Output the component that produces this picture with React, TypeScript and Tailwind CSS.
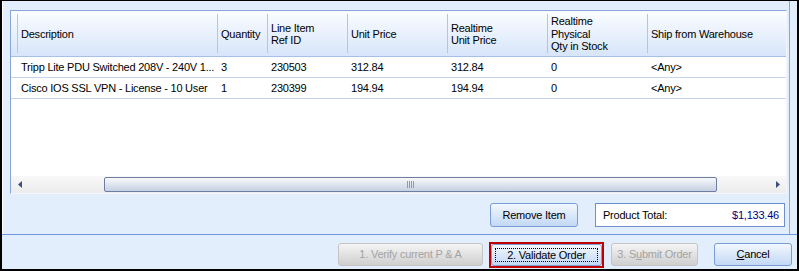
import React from "react";

const cols = [
  { w: "w-[200px]", label: ["Description"] },
  { w: "w-[50px]", label: ["Quantity"] },
  { w: "w-[80px]", label: ["Line Item", "Ref ID"] },
  { w: "w-[100px]", label: ["Unit Price"] },
  { w: "w-[100px]", label: ["Realtime", "Unit Price"] },
  { w: "w-[100px]", label: ["Realtime", "Physical", "Qty in Stock"] },
  { w: "w-[139px]", label: ["Ship from Warehouse"] },
];

const rows = [
  ["Tripp Lite PDU Switched 208V - 240V 1...", "3", "230503", "312.84", "312.84", "0", "<Any>"],
  ["Cisco IOS SSL VPN - License - 10 User", "1", "230399", "194.94", "194.94", "0", "<Any>"],
];

function Arrow({ dir }: { dir: "left" | "right" }) {
  return (
    <div className="w-[17px] h-full flex items-center justify-center">
      <svg width="4" height="7" viewBox="0 0 4 7">
        {dir === "left" ? (
          <polygon points="4,0 4,7 0,3.5" fill="#3d4f7c" />
        ) : (
          <polygon points="0,0 0,7 4,3.5" fill="#3d4f7c" />
        )}
      </svg>
    </div>
  );
}

function Grid() {
  return (
    <div className="w-[777px] h-[184px] shrink-0 flex flex-col bg-white border border-[#87a5d9] border-r-[#f3f7fd] border-b-[#f3f7fd]">
      <div className="h-[46px] shrink-0 flex border-b border-[#a6c0e6] bg-linear-to-b from-[#fbfdff] to-[#d7e5fa]">
        <div className="w-[6px] shrink-0" />
        {cols.map((c, i) => (
          <div key={i} className={`${c.w} shrink-0 flex`}>
            <div className="w-px my-[3px] bg-[#adc6ea]" />
            <div className="pl-[3px] pt-[1px] flex flex-col justify-center leading-[12.5px] whitespace-nowrap">
              {c.label.map((l, j) => (
                <span key={j}>{l}</span>
              ))}
            </div>
          </div>
        ))}
      </div>
      {rows.map((r, i) => (
        <div key={i} className="h-[21px] shrink-0 flex items-center border-b border-[#c6d5ec]">
          <div className="w-[6px] shrink-0" />
          {r.map((v, j) => (
            <div key={j} className={`${cols[j].w} shrink-0 pl-[4px] whitespace-nowrap overflow-hidden`}>
              {v}
            </div>
          ))}
        </div>
      ))}
      <div className="flex-1" />
      <div className="h-[17px] shrink-0 flex items-center bg-linear-to-b from-[#f8f8f8] to-[#ececec]">
        <Arrow dir="left" />
        <div className="flex-1 h-full flex items-center">
          <div className="ml-[76px] w-[613px] h-[15px] border border-[#6e7ea2] rounded-[2px] bg-linear-to-b from-[#f8f9fc] to-[#c6d0e1] flex items-center justify-center gap-[1px]">
            <div className="w-px h-[7px] bg-[#8e9ab4]" />
            <div className="w-px h-[7px] bg-[#8e9ab4]" />
            <div className="w-px h-[7px] bg-[#8e9ab4]" />
            <div className="w-px h-[7px] bg-[#8e9ab4]" />
          </div>
          <div className="w-[52px]" />
        </div>
        <Arrow dir="right" />
      </div>
    </div>
  );
}

const blueBtn =
  "border border-[#7c9dd3] rounded-[3px] bg-linear-to-b from-[#f2f8fe] to-[#c3d8f5] text-black flex items-center justify-center";
const grayBtn =
  "border border-[#c4c4c4] rounded-[3px] bg-linear-to-b from-[#f5f5f5] to-[#cfcfcf] text-[#a3a3a3] flex items-center justify-center";

export default function App() {
  return (
    <div className="w-[799px] h-[271px] bg-[#e3eefc] border-t border-l-2 border-r-2 border-b-2 border-black flex flex-col text-[11px] tracking-[-0.22px] text-black font-['Liberation_Sans',Arial,sans-serif] overflow-hidden">
      <div className="h-[234px] shrink-0 border-b border-[#6c97d9] flex">
        <div className="w-[788px] h-full border-l border-l-white border-r border-r-[#86a8de] pl-[7px] pt-[9px] flex flex-col">
          <Grid />
          <div className="w-[777px] mt-[9px] flex justify-end gap-[17px] pr-[2px]">
            <button className={`w-[88px] h-[24px] ${blueBtn}`}>Remove Item</button>
            <div className="w-[190px] h-[24px] bg-white border border-[#6d8fd0] flex items-center justify-between pl-[7px] pr-[5px]">
              <span>Product Total:</span>
              <span className="text-[#000080]">$1,133.46</span>
            </div>
          </div>
        </div>
      </div>
      <div className="h-[34px] shrink-0 flex justify-end items-start pt-[8px] pr-[5px]">
        <button className={`w-[145px] h-[23px] ${grayBtn}`}>1. Verify current P &amp; A</button>
        <div className="ml-[6px] -mt-[1px] w-[115px] h-[26px] border-2 border-[#c00000] flex">
          <button className={`flex-1 ${blueBtn} p-[3px]`}>
            <div className="w-full h-full border border-dotted border-black flex items-center justify-center">
              2. Validate Order
            </div>
          </button>
        </div>
        <button className={`ml-[7px] w-[87px] h-[23px] ${grayBtn}`}>
          3. S<span className="underline">u</span>bmit Order
        </button>
        <button className={`ml-[16px] w-[78px] h-[23px] ${blueBtn}`}>
          <span className="underline">C</span>ancel
        </button>
      </div>
    </div>
  );
}
